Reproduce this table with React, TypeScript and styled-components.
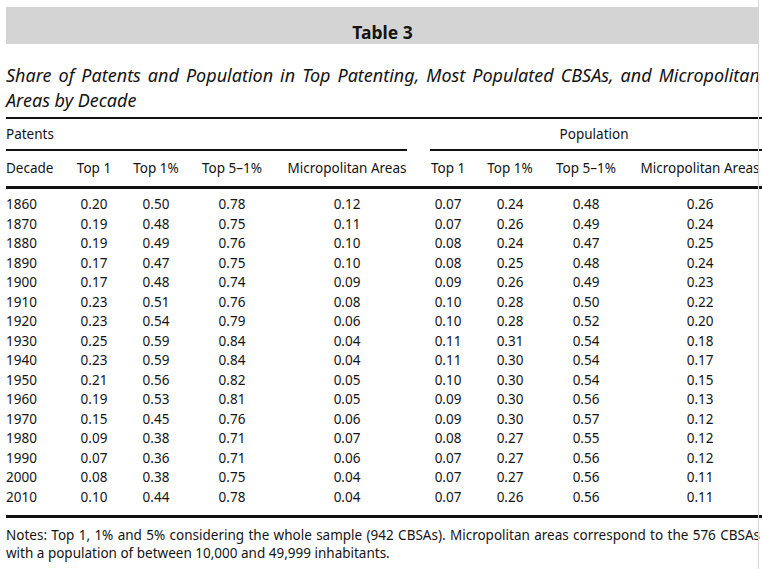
import React from "react";
import styled, { createGlobalStyle } from "styled-components";

const Global = createGlobalStyle`
  html, body { margin: 0; padding: 0; background: #fff; }
  body { overflow: hidden; font-family: "Noto Sans", "Open Sans", sans-serif; color: #141414; }
`;

const Page = styled.div`
  position: relative;
  width: 762px;
  height: 569px;
  overflow: hidden;
  &::after {
    content: "";
    position: absolute;
    left: 758px;
    top: 0;
    bottom: 0;
    width: 1px;
    background: #d6d6d6;
  }
`;

const Content = styled.div`
  width: 772px;
  padding: 7px 0 0 6px;
`;

const TitleBand = styled.div`
  width: 753px;
  height: 37px;
  box-sizing: border-box;
  padding: 17px 0 3px;
  background: #d4d4d4;
  text-align: center;
  font-size: 17.5px;
  font-weight: 700;
  line-height: 17px;
`;

const Caption = styled.div`
  width: 754px;
  margin: 18.5px 0 4.5px;
  font-style: italic;
  font-size: 18px;
  line-height: 25px;
`;

const Line = styled.span<{ $justify?: boolean }>`
  display: block;
  white-space: nowrap;
  text-align: ${(p) => (p.$justify ? "justify" : "left")};
  text-align-last: ${(p) => (p.$justify ? "justify" : "left")};
`;

const Table = styled.table`
  width: 772px;
  table-layout: fixed;
  border-collapse: separate;
  border-spacing: 0;
  border-top: 2px solid #111;
  border-bottom: 3px solid #111;
  font-size: 13.5px;
`;

const GroupCell = styled.th`
  padding: 0;
  font-weight: 400;
  vertical-align: top;
`;

const GroupLabel = styled.div<{ $side: "left" | "right" }>`
  height: 30px;
  line-height: 30px;
  border-bottom: 2px solid #111;
  text-align: ${(p) => (p.$side === "left" ? "left" : "center")};
  margin: ${(p) => (p.$side === "left" ? "0 19px 0 0" : "0 0 0 4px")};
  padding-right: ${(p) => (p.$side === "left" ? "0" : "20px")};
`;

const HeadCell = styled.th<{ $left?: boolean }>`
  padding: 0;
  font-weight: 400;
  line-height: 35px;
  white-space: nowrap;
  text-align: ${(p) => (p.$left ? "left" : "center")};
  border-bottom: 3px solid #111;
`;

const Row = styled.tr`
  &:first-child td { padding-top: 6.25px; }
  &:last-child td { padding-bottom: 7.75px; }
`;

const Cell = styled.td<{ $left?: boolean }>`
  padding: 0;
  line-height: 19.5px;
  white-space: nowrap;
  text-align: ${(p) => (p.$left ? "left" : "center")};
`;

const Notes = styled.div`
  width: 754px;
  margin-top: 8px;
  font-size: 13.5px;
  line-height: 18px;
`;

const widths = [66, 44, 80, 72, 158, 44, 80, 72, 156];
const heads = [
  "Decade",
  "Top 1",
  "Top 1%",
  "Top 5–1%",
  "Micropolitan Areas",
  "Top 1",
  "Top 1%",
  "Top 5–1%",
  "Micropolitan Areas",
];

const rows: string[][] = [
  ["1860", "0.20", "0.50", "0.78", "0.12", "0.07", "0.24", "0.48", "0.26"],
  ["1870", "0.19", "0.48", "0.75", "0.11", "0.07", "0.26", "0.49", "0.24"],
  ["1880", "0.19", "0.49", "0.76", "0.10", "0.08", "0.24", "0.47", "0.25"],
  ["1890", "0.17", "0.47", "0.75", "0.10", "0.08", "0.25", "0.48", "0.24"],
  ["1900", "0.17", "0.48", "0.74", "0.09", "0.09", "0.26", "0.49", "0.23"],
  ["1910", "0.23", "0.51", "0.76", "0.08", "0.10", "0.28", "0.50", "0.22"],
  ["1920", "0.23", "0.54", "0.79", "0.06", "0.10", "0.28", "0.52", "0.20"],
  ["1930", "0.25", "0.59", "0.84", "0.04", "0.11", "0.31", "0.54", "0.18"],
  ["1940", "0.23", "0.59", "0.84", "0.04", "0.11", "0.30", "0.54", "0.17"],
  ["1950", "0.21", "0.56", "0.82", "0.05", "0.10", "0.30", "0.54", "0.15"],
  ["1960", "0.19", "0.53", "0.81", "0.05", "0.09", "0.30", "0.56", "0.13"],
  ["1970", "0.15", "0.45", "0.76", "0.06", "0.09", "0.30", "0.57", "0.12"],
  ["1980", "0.09", "0.38", "0.71", "0.07", "0.08", "0.27", "0.55", "0.12"],
  ["1990", "0.07", "0.36", "0.71", "0.06", "0.07", "0.27", "0.56", "0.12"],
  ["2000", "0.08", "0.38", "0.75", "0.04", "0.07", "0.27", "0.56", "0.11"],
  ["2010", "0.10", "0.44", "0.78", "0.04", "0.07", "0.26", "0.56", "0.11"],
];

export default function App() {
  return (
    <Page>
      <Global />
      <Content>
        <TitleBand>Table 3</TitleBand>
        <Caption>
          <Line $justify>
            Share of Patents and Population in Top Patenting, Most Populated CBSAs, and Micropolitan
          </Line>
          <Line>Areas by Decade</Line>
        </Caption>
        <Table>
          <colgroup>
            {widths.map((w, i) => (
              <col key={i} style={{ width: w }} />
            ))}
          </colgroup>
          <thead>
            <tr>
              <GroupCell colSpan={5}>
                <GroupLabel $side="left">Patents</GroupLabel>
              </GroupCell>
              <GroupCell colSpan={4}>
                <GroupLabel $side="right">Population</GroupLabel>
              </GroupCell>
            </tr>
            <tr>
              {heads.map((h, i) => (
                <HeadCell key={i} $left={i === 0}>
                  {h}
                </HeadCell>
              ))}
            </tr>
          </thead>
          <tbody>
            {rows.map((r) => (
              <Row key={r[0]}>
                {r.map((v, i) => (
                  <Cell key={i} $left={i === 0}>
                    {v}
                  </Cell>
                ))}
              </Row>
            ))}
          </tbody>
        </Table>
        <Notes>
          <Line $justify>
            Notes: Top 1, 1% and 5% considering the whole sample (942 CBSAs). Micropolitan areas correspond to the 576 CBSAs
          </Line>
          <Line>with a population of between 10,000 and 49,999 inhabitants.</Line>
        </Notes>
      </Content>
    </Page>
  );
}
